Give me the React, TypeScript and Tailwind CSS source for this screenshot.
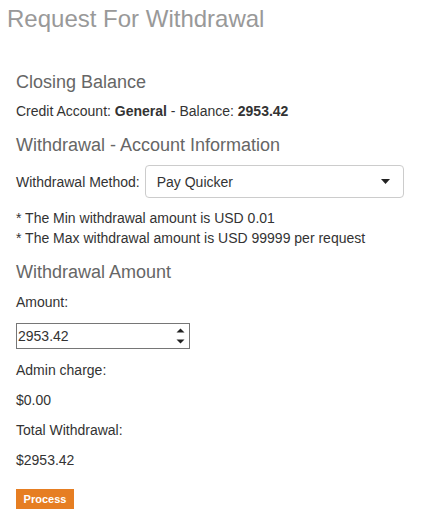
import React from 'react';

export default function App() {
  return (
    <div className="min-h-screen bg-white text-[14px] leading-[20px] text-[#333] font-['Liberation_Sans',Arial,sans-serif]">
      <h1 className="pl-[7px] pt-[6px] text-[24px] leading-[26px] font-normal text-[#999]">Request For Withdrawal</h1>

      <div className="px-4">
        <h2 className="mt-[40px] text-[18px] leading-[20px] font-normal text-[#666]">Closing Balance</h2>
        <p className="mt-[9px]">
          Credit Account: <b>General</b> - Balance: <b>2953.42</b>
        </p>

        <h2 className="mt-[14px] text-[18px] leading-[20px] font-normal text-[#666]">Withdrawal - Account Information</h2>
        <div className="mt-[10px] flex items-center gap-[5px]">
          <span>Withdrawal Method:</span>
          <div className="flex h-[33px] w-[259px] items-center justify-between rounded-[4px] border border-[#ccc] bg-white pl-[11px] pr-[13px]">
            <span>Pay Quicker</span>
            <svg width="9" height="5" viewBox="0 0 9 5">
              <path d="M0 0h9L4.5 5z" fill="#222" />
            </svg>
          </div>
        </div>

        <p className="mt-[10px]">* The Min withdrawal amount is USD 0.01</p>
        <p>* The Max withdrawal amount is USD 99999 per request</p>

        <h2 className="mt-[14px] text-[18px] leading-[20px] font-normal text-[#666]">Withdrawal Amount</h2>
        <p className="mt-[10px]">Amount:</p>
        <div className="mt-[11px] flex h-[26px] w-[174px] items-center justify-between border border-[#767676] pl-[1px] pr-[4px]">
          <span>2953.42</span>
          <svg width="9" height="18" viewBox="0 0 9 18">
            <path d="M0.5 5.5L4.5 1.5L8.5 5.5z" fill="#222" />
            <path d="M0.5 12.5L4.5 16.5L8.5 12.5z" fill="#222" />
          </svg>
        </div>

        <p className="mt-[11px]">Admin charge:</p>
        <p className="mt-[10px]">$0.00</p>
        <p className="mt-[10px]">Total Withdrawal:</p>
        <p className="mt-[10px]">$2953.42</p>

        <button className="mt-[19px] flex h-[20px] w-[58px] items-center justify-center bg-[#e67e22] text-[11px] font-bold text-white">
          Process
        </button>
      </div>
    </div>
  );
}
